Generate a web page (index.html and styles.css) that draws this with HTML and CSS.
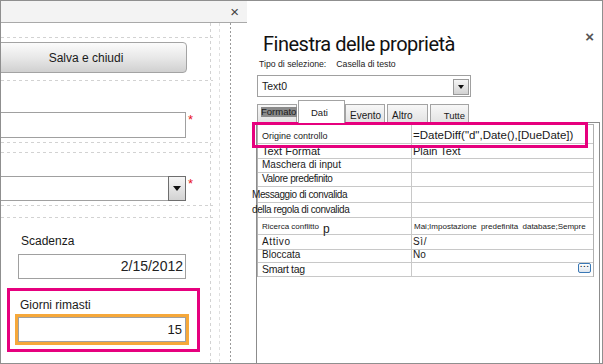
FILE: index.html
```html
<!DOCTYPE html>
<html lang="it">
<head>
    <meta charset="UTF-8">
    <title>Finestra delle proprietà</title>
    <link rel="stylesheet" href="styles.css">
</head>
<body>
    <div class="window">
        <div class="form-pane">
            <div class="pane-bar"><span class="close">×</span></div>
            <div class="canvas">
                <div class="btn-save">Salva e chiudi</div>
                <div class="field field-first">
                    <div class="textbox"></div>
                    <span class="req">*</span>
                </div>
                <div class="field field-combo">
                    <div class="combo"><span class="drop"></span></div>
                    <span class="req">*</span>
                </div>
                <div class="group">
                    <div class="lbl">Scadenza</div>
                    <div class="textbox date">2/15/2012</div>
                </div>
                <div class="hl">
                    <div class="lbl">Giorni rimasti</div>
                    <div class="focus"><div class="textbox num">15</div></div>
                </div>
            </div>
        </div>

        <div class="prop-pane">
            <div class="prop-head">
                <h1 class="prop-title">Finestra delle proprietà</h1>
                <span class="prop-close">×</span>
            </div>
            <div class="sel-type">
                <span>Tipo di selezione:</span>
                <span>Casella di testo</span>
            </div>
            <div class="prop-combo">
                <span>Text0</span>
                <span class="drop small"></span>
            </div>
            <div class="tabs">
                <div class="tab tab-formato"><span class="mark">Formato</span></div>
                <div class="tab active">Dati</div>
                <div class="tab tab-evento">Evento</div>
                <div class="tab tab-altro">Altro</div>
                <div class="tab tab-tutte">Tutte</div>
            </div>
            <div class="sheet">
                <div class="grid">
                    <div class="k f9">Origine controllo</div>
                    <div class="v f12">=DateDiff("d",Date(),[DueDate])</div>

                    <div class="k f11">Text Format</div>
                    <div class="v f11">Plain Text</div>

                    <div class="k f10">Maschera di input</div>
                    <div class="v"></div>

                    <div class="k f10 tight">Valore predefinito</div>
                    <div class="v"></div>

                    <div class="k f10 tight spill">Messaggio di convalida</div>
                    <div class="v"></div>

                    <div class="k f10 tight spill">della regola di convalida</div>
                    <div class="v"></div>

                    <div class="k"><span class="f8">Ricerca conflitto</span><span class="pee">p</span></div>
                    <div class="v f8 wide">Mai;Impostazione predefinita database;Sempre</div>

                    <div class="k f10 loose">Attivo</div>
                    <div class="v f10 loose">Sì/</div>

                    <div class="k f10">Bloccata</div>
                    <div class="v f10">No</div>

                    <div class="k f10 smart">Smart tag</div>
                    <div class="v"><span class="more">...</span></div>
                </div>
                <div class="callout"></div>
            </div>
        </div>
    </div>
</body>
</html>
```

FILE: styles.css
```css
body {
    margin: 0;
    font-family: "Liberation Sans", Arial, sans-serif;
    color: #1a1a1a;
}
.window {
    width: 603px;
    height: 364px;
    box-sizing: border-box;
    border: 1px solid #8f8f8f;
    display: flex;
    overflow: hidden;
    background: #fff;
}

/* left: form design surface */
.form-pane {
    width: 246px;
    flex: none;
    display: flex;
    flex-direction: column;
}
.pane-bar {
    height: 21px;
    background: #f3f3f3;
    border-bottom: 1px solid #a9a9a9;
    display: flex;
    justify-content: flex-end;
    align-items: center;
    padding-right: 8px;
}
.close {
    font-size: 15px;
    line-height: 1;
    color: #444;
}
.canvas {
    flex: 1;
    overflow: hidden;
    background:
        linear-gradient(#9a9a9a 50%, transparent 0) 229px 0 / 1px 4px repeat-y,
        linear-gradient(#d2d2d2 50%, transparent 0) 209px 0 / 1px 6px repeat-y,
        linear-gradient(#e0e0e0 50%, transparent 0) 218px 0 / 1px 6px repeat-y,
        repeating-linear-gradient(90deg, #d2d2d2 0 3px, transparent 3px 6px) 0 14px / 212px 1px no-repeat,
        repeating-linear-gradient(90deg, #d2d2d2 0 3px, transparent 3px 6px) 0 57px / 212px 1px no-repeat,
        repeating-linear-gradient(90deg, #d2d2d2 0 3px, transparent 3px 6px) 0 119px / 212px 1px no-repeat,
        repeating-linear-gradient(90deg, #d2d2d2 0 3px, transparent 3px 6px) 0 129px / 212px 1px no-repeat,
        repeating-linear-gradient(90deg, #d2d2d2 0 3px, transparent 3px 6px) 0 182px / 212px 1px no-repeat,
        repeating-linear-gradient(90deg, #d2d2d2 0 3px, transparent 3px 6px) 0 194px / 212px 1px no-repeat,
        #fff;
}
.btn-save {
    margin: 19px 0 0 -16px;
    width: 202px;
    height: 31px;
    box-sizing: border-box;
    border: 1px solid #a3a3a3;
    border-radius: 4px;
    background: linear-gradient(#fbfbfb, #e8e8e8 50%, #d0d0d0);
    display: flex;
    align-items: center;
    justify-content: center;
    font-size: 12px;
}
.field {
    display: flex;
    align-items: flex-start;
    margin-left: -5px;
}
.field-first {
    margin-top: 39px;
}
.field-combo {
    margin-top: 38px;
}
.textbox {
    width: 190px;
    height: 26px;
    box-sizing: border-box;
    border: 1px solid #a0a0a0;
    background: #fff;
}
.req {
    color: #e8141c;
    font-size: 13px;
    line-height: 10px;
    margin: 3px 0 0 2px;
}
.combo {
    width: 190px;
    height: 25px;
    box-sizing: border-box;
    border: 1px solid #a0a0a0;
    display: flex;
    justify-content: flex-end;
}
.drop {
    width: 18px;
    margin: -1px -1px -1px 0;
    box-sizing: border-box;
    border: 1px solid #6e6e6e;
    background: linear-gradient(#f6f6f6, #d2d2d2);
    display: flex;
    align-items: center;
    justify-content: center;
}
.drop::before {
    content: "";
    border-left: 4px solid transparent;
    border-right: 4px solid transparent;
    border-top: 5px solid #111;
}
.group {
    margin-top: 33px;
}
.lbl {
    font-size: 12px;
    line-height: 14px;
    margin-left: 20px;
}
.date {
    margin: 6px 0 0 17px;
    width: 168px;
    height: 25px;
    text-align: right;
    padding-right: 2px;
    font-size: 14px;
    line-height: 23px;
    color: #222;
}
.hl {
    margin: 9px 0 0 6px;
    width: 193px;
    height: 64px;
    box-sizing: border-box;
    border: 3px solid #e6007e;
}
.hl .lbl {
    margin: 7px 0 0 10px;
}
.focus {
    margin: 2px 0 0 5px;
    width: 174px;
    height: 31px;
    box-sizing: border-box;
    border: 3px solid #f6a83a;
}
.num {
    width: 100%;
    height: 100%;
    text-align: right;
    padding-right: 3px;
    font-size: 13px;
    line-height: 23px;
}

/* right: property sheet */
.prop-pane {
    flex: 1;
    display: flex;
    flex-direction: column;
    padding-left: 10px;
}
.prop-head {
    display: flex;
    justify-content: space-between;
    align-items: flex-start;
    margin-top: 31px;
}
.prop-title {
    margin: 0 0 0 6px;
    font-family: Roboto, "Liberation Sans", sans-serif;
    font-weight: 400;
    font-size: 20px;
    line-height: 24px;
    letter-spacing: -0.5px;
    color: #111;
}
.prop-close {
    font-size: 15px;
    font-weight: bold;
    line-height: 15px;
    margin: -3px 8px 0 0;
    color: #555;
}
.sel-type {
    display: flex;
    gap: 10px;
    margin: 2px 0 0 2px;
    font-size: 8.7px;
    line-height: 12px;
    color: #222;
}
.prop-combo {
    margin-top: 5px;
    width: 214px;
    height: 22px;
    box-sizing: border-box;
    border: 1px solid #a0a0a0;
    display: flex;
    align-items: center;
    justify-content: space-between;
    padding: 0 1px 0 4px;
    font-size: 10.5px;
}
.drop.small {
    width: 16px;
    height: 16px;
    margin: 1px 0 0 0;
    border-color: #9a9a9a;
}
.drop.small::before {
    border-left-width: 3.5px;
    border-right-width: 3.5px;
    border-top-width: 4px;
}
.tabs {
    display: flex;
    align-items: flex-end;
    height: 23px;
    margin: 3px 0 -1px;
    position: relative;
    z-index: 1;
}
.tab {
    height: 18px;
    box-sizing: border-box;
    margin-bottom: 1px;
    border: 1px solid #a3a3a3;
    border-bottom: none;
    background: linear-gradient(#f7f7f7, #e3e3e3);
    font-size: 10px;
    display: flex;
    align-items: flex-end;
    padding: 0 0 0 4px;
    line-height: 12px;
}
.tab-formato {
    width: 40px;
    align-items: flex-start;
    padding: 2px 0 0 3px;
}
.mark {
    background: #8a8a8a;
    font-size: 9.5px;
    line-height: 10px;
    padding-right: 1px;
}
.tab.active {
    width: 47px;
    height: 23px;
    margin: 0 0 0 1px;
    background: #fff;
    align-items: flex-start;
    padding: 6px 0 0 12px;
    font-size: 9.5px;
}
.tab-evento {
    width: 40px;
}
.tab-altro {
    width: 41px;
    margin-left: 2px;
}
.tab-tutte {
    width: 39px;
    margin-left: 2px;
    justify-content: flex-end;
    padding-right: 3px;
    font-size: 9.5px;
}
.sheet {
    flex: 1;
    margin: 0 2px 0 -1px;
    border: 1px solid #8c8c8c;
    border-bottom: none;
    position: relative;
}
.grid {
    margin: 1px 5px 0 0;
    border-top: 1px solid #b0b0b0;
    border-left: 1px solid #b0b0b0;
    border-right: 1px solid #b0b0b0;
    display: grid;
    grid-template-columns: 154px 1fr;
    grid-template-rows: 19px 15px 14px 14px 16px 15px 17px 15px 13px 14px;
}
.k,
.v {
    border-bottom: 1px solid #c8c8c8;
    display: flex;
    align-items: flex-end;
    white-space: nowrap;
    line-height: 12px;
    padding-bottom: 1px;
    box-sizing: border-box;
}
.k {
    border-right: 1px solid #c8c8c8;
    padding-left: 4px;
}
.v {
    padding-left: 1px;
}
.f8 { font-size: 8px; }
.f9 { font-size: 9px; }
.f10 { font-size: 10px; }
.f11 { font-size: 11px; }
.f12 { font-size: 11.5px; line-height: 14px; }
.tight { letter-spacing: -0.4px; }
.loose { letter-spacing: 0.6px; }
.wide { word-spacing: 2px; padding-left: 2px; }
.spill { text-indent: -10px; }
.smart { font-size: 10.5px; letter-spacing: -0.3px; }
.pee {
    font-size: 12px;
    margin-left: 4px;
    line-height: 12px;
    position: relative;
    top: 2px;
}
.more {
    margin: 0 2px 2px auto;
    align-self: center;
    width: 13px;
    height: 10px;
    box-sizing: border-box;
    border: 1px solid #3a78b5;
    border-radius: 2px;
    background: linear-gradient(#ffffff, #dfe6ee);
    font-size: 8px;
    line-height: 2px;
    font-weight: bold;
    letter-spacing: 1px;
    text-indent: 1px;
    color: #1a2a3a;
}
.callout {
    position: absolute;
    left: -5px;
    top: -1px;
    width: 336px;
    height: 26px;
    box-sizing: border-box;
    border: 3px solid #e6007e;
}
```
